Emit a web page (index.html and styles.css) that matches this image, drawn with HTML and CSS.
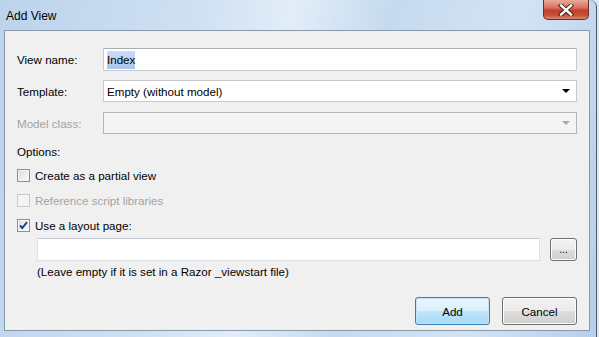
FILE: index.html
```html
<!DOCTYPE html>
<html lang="en">
<head>
    <meta charset="UTF-8">
    <title>Add View</title>
    <link rel="stylesheet" href="styles.css">
</head>
<body>
    <div class="window">
        <div class="titlebar">
            <span class="title">Add View</span>
            <button class="close-btn" title="Close">
                <svg width="16" height="12" viewBox="0 0 16 12">
                    <path d="M3 1.5 L13 10.5 M13 1.5 L3 10.5" stroke="#3b1a14" stroke-width="4.2" stroke-linecap="square"/>
                    <path d="M3 1.5 L13 10.5 M13 1.5 L3 10.5" stroke="#ffffff" stroke-width="2.4" stroke-linecap="square"/>
                </svg>
            </button>
        </div>
        <div class="panel">
            <div class="field">
                <label class="label">View name:</label>
                <div class="textbox"><span class="selected">Index</span></div>
            </div>
            <div class="field">
                <label class="label">Template:</label>
                <div class="combo">
                    <span>Empty (without model)</span>
                    <span class="arrow"></span>
                </div>
            </div>
            <div class="field">
                <label class="label disabled">Model class:</label>
                <div class="combo combo-disabled">
                    <span></span>
                    <span class="arrow"></span>
                </div>
            </div>

            <div class="options-title">Options:</div>
            <div class="check-row check-first">
                <span class="checkbox"></span>
                <span>Create as a partial view</span>
            </div>
            <div class="check-row disabled">
                <span class="checkbox checkbox-disabled"></span>
                <span>Reference script libraries</span>
            </div>
            <div class="check-row">
                <span class="checkbox">
                    <svg width="11" height="11" viewBox="0 0 11 11">
                        <path d="M2 5.5 L4.3 8 L9 2.2" fill="none" stroke="#1f3a87" stroke-width="1.9"/>
                    </svg>
                </span>
                <span>Use a layout page:</span>
            </div>

            <div class="layout-row">
                <div class="textbox layout-path"></div>
                <button class="btn btn-small">...</button>
            </div>
            <div class="hint">(Leave empty if it is set in a Razor _viewstart file)</div>

            <div class="actions">
                <button class="btn btn-default">Add</button>
                <button class="btn">Cancel</button>
            </div>
        </div>
    </div>
</body>
</html>
```

FILE: styles.css
```css
body {
    margin: 0;
    background-color: #dce8f4;
    font-family: "Liberation Sans", Arial, sans-serif;
    font-size: 11.6px;
    color: #000;
    overflow: hidden;
}
.window {
    width: 596px;
    height: 337px;
    border-right: 1px solid #4d5b6b;
    border-top-right-radius: 7px;
    background: linear-gradient(100deg, #bcd3ec 0%, #cfe0f2 30%, #e2edf8 45%, #c6daef 60%, #d3e3f4 80%, #b7cfea 100%);
}
.titlebar {
    display: flex;
    height: 30px;
    padding-left: 6px;
    padding-right: 7px;
}
.title {
    font-size: 12px;
    line-height: 12px;
    margin-top: 10px;
}
.close-btn {
    margin-left: auto;
    width: 46px;
    height: 20px;
    padding: 0;
    border: 1px solid #6b2e27;
    border-top: none;
    border-radius: 0 0 5px 5px;
    background: linear-gradient(#e8a99a 0%, #d9735f 40%, #c0412b 55%, #c5503a 80%, #d78a70 100%);
    display: flex;
    align-items: center;
    justify-content: center;
}
.panel {
    margin-left: 4px;
    width: 560px;
    height: 282px;
    padding: 17px 12px 0 12px;
    border: 1px solid #8898ab;
    background-color: #f0f0f0;
}
.field {
    display: grid;
    grid-template-columns: 86px 474px;
    align-items: center;
    height: 22px;
    margin-bottom: 10px;
}
.label.disabled,
.check-row.disabled {
    color: #a3a3a3;
}
.textbox {
    box-sizing: border-box;
    height: 23px;
    padding: 0 3px;
    border: 1px solid #c6ccd4;
    border-top-color: #abadb3;
    background-color: #fff;
    display: flex;
    align-items: center;
}
.selected {
    background: linear-gradient(#c9dcf3, #a9c6ec);
    padding: 2px 0 3px 0;
}
.combo {
    box-sizing: border-box;
    height: 22px;
    padding: 0 6px 0 3px;
    border: 1px solid #c8c8c8;
    background-color: #fff;
    display: flex;
    align-items: center;
    justify-content: space-between;
}
.combo-disabled {
    background-color: #f4f4f4;
    border-color: #b5b5b5;
}
.arrow {
    width: 0;
    height: 0;
    border-left: 4px solid transparent;
    border-right: 4px solid transparent;
    border-top: 4px solid #000;
}
.combo-disabled .arrow {
    border-top-color: #a8a8a8;
}
.options-title {
    height: 16px;
    line-height: 16px;
}
.check-row {
    display: flex;
    align-items: center;
    gap: 5px;
    height: 25px;
}
.check-first {
    margin-top: 3px;
}
.checkbox {
    box-sizing: border-box;
    width: 13px;
    height: 13px;
    border: 1px solid #8e8f8f;
    background: linear-gradient(135deg, #dcdcdc, #fbfbfb);
    box-shadow: inset 0 0 0 1px #f4f4f4;
    display: flex;
    align-items: center;
    justify-content: center;
}
.checkbox-disabled {
    border-color: #c9c9c9;
    background: #f4f4f4;
}
.layout-row {
    display: flex;
    gap: 10px;
    margin-left: 20px;
    height: 23px;
}
.layout-path {
    width: 504px;
    border-color: #dbdfe6;
    border-top-color: #c0c4cc;
}
.hint {
    margin-left: 20px;
    margin-top: 3px;
    height: 16px;
    line-height: 16px;
}
.actions {
    display: flex;
    justify-content: flex-end;
    gap: 12px;
    margin-top: 17px;
}
.btn {
    width: 75px;
    height: 28px;
    font-family: "Liberation Sans", Arial, sans-serif;
    font-size: 11.6px;
    color: #000;
    border: 1px solid #707070;
    border-radius: 3px;
    background: linear-gradient(#f2f2f2 0%, #ebebeb 50%, #dddddd 50%, #cfcfcf 100%);
    box-shadow: inset 0 0 0 1px #fcfcfc;
    padding: 0;
}
.btn-small {
    width: 27px;
    height: 23px;
    font-size: 10px;
    line-height: 10px;
}
.btn-default {
    border-color: #3c7fb1;
    background: linear-gradient(#eaf6fd 0%, #d9f0fc 50%, #bee6fd 50%, #a7d9f5 100%);
    box-shadow: inset 0 0 0 1px #c6e2f3;
}
```
